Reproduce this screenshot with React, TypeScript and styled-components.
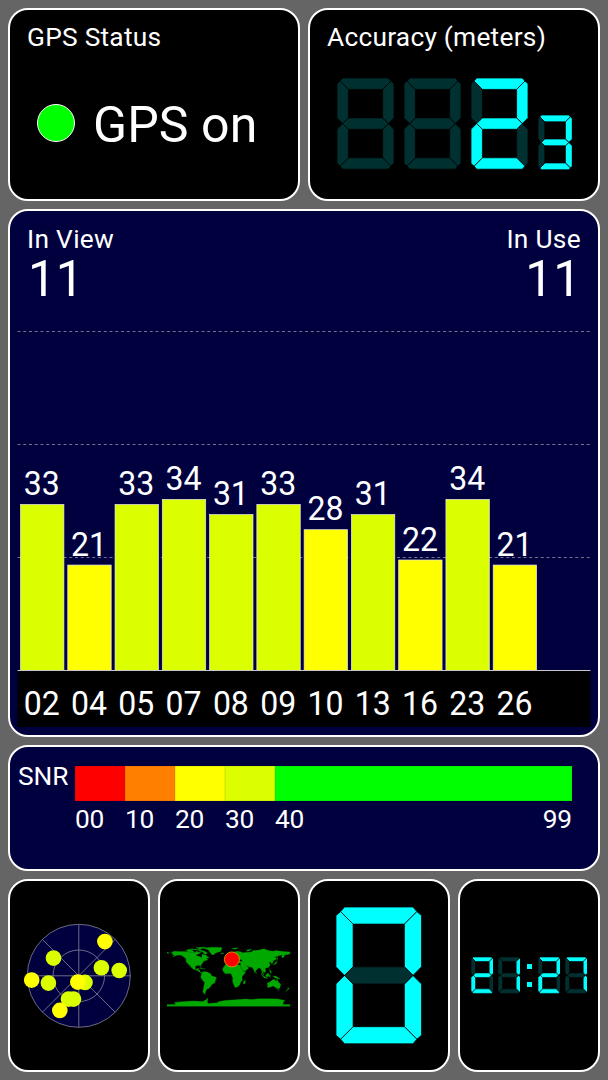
import React from "react";
import styled, { createGlobalStyle } from "styled-components";

const LIME = "#dcff00";
const YELLOW = "#ffff00";
const NAVY = "#00003f";
const CYAN = "#00ffff";
const DIM = "#003030";

const GlobalStyle = createGlobalStyle`
  html, body { margin: 0; background: #656565; }
  * { box-sizing: border-box; }
  svg { display: block; }
`;

const Screen = styled.main`
  width: 608px;
  height: 1080px;
  padding: 8px;
  display: grid;
  grid-template-rows: 193px 528px 126px 193px;
  row-gap: 8px;
  background: #656565;
  color: #fff;
  font-family: Roboto, sans-serif;
  overflow: hidden;
`;

const Row = styled.div<{ $columns: number }>`
  display: grid;
  grid-template-columns: repeat(${(p) => p.$columns}, 1fr);
  column-gap: 8px;
`;

const Panel = styled.section<{ $navy?: boolean }>`
  display: flex;
  flex-direction: column;
  min-width: 0;
  border: 2px solid #fff;
  border-radius: 20px;
  background: ${(p) => (p.$navy ? NAVY : "#000")};
  overflow: hidden;
`;

const IconPanel = styled(Panel)`
  align-items: center;
  justify-content: center;
`;

const Title = styled.h2`
  margin: 0;
  padding: 12px 17px 0;
  height: 42px;
  font-size: 26.3px;
  line-height: 30px;
  font-weight: 400;
  letter-spacing: 0.25px;
  white-space: nowrap;
`;

const StatusLine = styled.div`
  display: flex;
  align-items: center;
  gap: 18.5px;
  margin-top: 41px;
  padding-left: 26.5px;
  font-size: 50px;
  line-height: 60px;
  letter-spacing: 0.1px;
`;

const StatusText = styled.span`
  padding-top: 2px;
  margin-bottom: -2px;
`;

const Lamp = styled.span`
  width: 38px;
  height: 38px;
  border-radius: 50%;
  border: 1px solid #fff;
  background: #00ff00;
`;

const Readout = styled.div`
  display: flex;
  align-items: flex-end;
  gap: 10px;
  margin: 26.4px 0 0 27px;
`;

const Counts = styled.div`
  display: flex;
  justify-content: space-between;
  height: 92px;
  padding: 13px 17px 0;
`;

const Count = styled.div<{ $right?: boolean }>`
  text-align: ${(p) => (p.$right ? "right" : "left")};
  font-size: 26.3px;
  line-height: 30px;
  letter-spacing: 0.3px;
`;

const CountValue = styled.div`
  padding-left: 1px;
  font-size: 49.5px;
  line-height: 50px;
  letter-spacing: 0;
`;

const Scale = styled.div`
  display: flex;
  padding: 19px 0 0 8px;
  font-size: 26.3px;
  line-height: 30px;
`;

const ScaleName = styled.span`
  width: 56.7px;
  margin-top: -5px;
`;

const ScaleBody = styled.div`
  width: 497px;
`;

const ScaleBar = styled.div`
  display: flex;
  height: 35px;
`;

const Band = styled.div<{ $color: string; $wide?: boolean }>`
  flex: ${(p) => (p.$wide ? "1" : "0 0 50px")};
  background: ${(p) => p.$color};
  box-shadow: inset 0 0 0 0.5px rgba(0, 0, 0, 0.12);
`;

const ScaleLabels = styled.div`
  display: flex;
  margin-top: 3px;
`;

const ScaleLabel = styled.span`
  width: 50px;
  padding-left: 0.4px;
  letter-spacing: -0.3px;
  &:last-child {
    width: auto;
    margin-left: auto;
  }
`;

const Clock = styled.div`
  display: flex;
  align-items: center;
  gap: 4.2px;
`;

const Colon = styled.div`
  display: flex;
  flex-direction: column;
  gap: 13px;
  margin: 0 1.8px 0 2px;
`;

const ColonDot = styled.i`
  width: 5px;
  height: 5px;
  background: ${CYAN};
`;

const SEGMENTS: Record<string, string> = {
  a: "0.27,0.27 0.5,0 4.5,0 4.73,0.27 4,1 1,1",
  b: "4.73,0.27 5,0.5 5,3.5 4.5,4 4,3.5 4,1",
  c: "4.5,4 5,4.5 5,7.5 4.73,7.73 4,7 4,4.5",
  d: "4.73,7.73 4.5,8 0.5,8 0.27,7.73 1,7 4,7",
  e: "0.27,7.73 0,7.5 0,4.5 0.5,4 1,4.5 1,7",
  f: "0.27,0.27 0,0.5 0,3.5 0.5,4 1,3.5 1,1",
  g: "0.5,4 1,3.5 4,3.5 4.5,4 4,4.5 1,4.5",
};

const LIT: Record<string, string> = {
  "": "",
  "0": "abcdef",
  "1": "bc",
  "2": "abged",
  "3": "abgcd",
  "7": "abc",
};

function Digit({ value, unit }: { value: string; unit: number }) {
  return (
    <svg width={unit * 5} height={unit * 8} viewBox="0 0 5 8">
      {Object.entries(SEGMENTS).map(([name, points]) => (
        <polygon
          key={name}
          points={points}
          fill={LIT[value].includes(name) ? CYAN : DIM}
          stroke="#000"
          strokeWidth={Math.min(0.13, 0.75 / unit)}
          strokeLinejoin="bevel"
        />
      ))}
    </svg>
  );
}

const SATELLITES: [string, number][] = [
  ["02", 33], ["04", 21], ["05", 33], ["07", 34], ["08", 31], ["09", 33],
  ["10", 28], ["13", 31], ["16", 22], ["23", 34], ["26", 21],
];

const BASE = 368.5;

function SignalChart() {
  return (
    <svg width="588" height="432" viewBox="0 1 588 432" fontSize="33" fill="#fff" textAnchor="middle">
      <rect x="7.5" y={BASE} width="573" height="56.5" fill="#000" />
      {[29.5, 142.5, 255.5].map((y) => (
        <line key={y} x1="7.5" x2="580" y1={y} y2={y} stroke="#73738f" strokeDasharray="3 2.75" />
      ))}
      {SATELLITES.map(([id, snr], i) => {
        const x = 10.5 + i * 47.27;
        const h = snr * 5.05 - 0.6;
        return (
          <g key={id}>
            <rect x={x} y={BASE - h} width="43.4" height={h} fill={snr > 29 ? LIME : YELLOW} stroke="#e8e8e8" strokeWidth="0.7" />
            <text x={x + 21.3} y={BASE - h - 9.3} textLength="36" lengthAdjust="spacingAndGlyphs">{snr}</text>
            <text x={x + 21.3} y={BASE + 44} textLength="36" lengthAdjust="spacingAndGlyphs">{id}</text>
          </g>
        );
      })}
      <line x1="7.5" x2="580.5" y1={BASE} y2={BASE} stroke="#c8c8c8" />
    </svg>
  );
}

const SKY_DOTS: [number, number, string][] = [
  [26.1, -34.2, YELLOW], [-25.3, -17.7, LIME], [22.6, -8, LIME], [40.4, -5.3, LIME],
  [-30.4, 7.3, LIME], [-47.1, 4.3, YELLOW], [6.2, 6.6, LIME], [-1, 6.3, YELLOW],
  [-10.3, 23.3, LIME], [-5.3, 23.3, LIME], [-19, 34.6, YELLOW],
];

function SkyPlot() {
  return (
    <svg width="112" height="112" viewBox="-55.8 -55.8 112 112">
      <g stroke="#85859c" strokeWidth="0.8" fill="none">
        <circle r="51.5" fill={NAVY} />
        <circle r="25.8" />
        <path d="M0-51.5V51.5M-51.5 0H51.5M-36.4-36.4L36.4 36.4M36.4-36.4L-36.4 36.4" />
      </g>
      {SKY_DOTS.map(([x, y, color]) => (
        <circle key={`${x},${y}`} cx={x} cy={y} r="7.8" fill={color} />
      ))}
    </svg>
  );
}

/* Coastlines in degrees of longitude and negated latitude. */
const LAND = [
  "-168,-66 -165,-68 -162,-70 -156,-71 -141,-70 -128,-70 -120,-69 -108,-68 -96,-68 -94,-72 -88,-68 -82,-69 -82,-66 -87,-64 -94,-60 -94,-58 -82,-55 -80,-51 -78,-55 -77,-62 -70,-61 -65,-59 -60,-54 -56,-52 -66,-50 -60,-46 -66,-44 -70,-43 -74,-40 -76,-36 -81,-31 -80,-25 -83,-29 -90,-30 -97,-27 -97,-20 -94,-18 -90,-21 -87,-21 -89,-16 -84,-15 -83,-10 -78,-9 -80,-7 -86,-11 -94,-16 -104,-19 -109,-25 -113,-31 -115,-31 -110,-23 -117,-33 -124,-40 -124,-48 -130,-54 -140,-60 -152,-59 -158,-56 -164,-54 -157,-59 -165,-61 -161,-64",
  "-125,-72 -117,-76 -105,-73 -101,-69 -115,-69",
  "-90,-73 -80,-74 -68,-70 -62,-66 -66,-62 -74,-65 -73,-69 -82,-70",
  "-120,-76 -108,-78 -95,-77 -82,-76 -80,-75 -98,-75",
  "-95,-81 -80,-83 -65,-83 -75,-79 -88,-77 -88,-80",
  "-72,-78 -60,-82 -40,-83 -20,-82 -20,-75 -24,-70 -38,-66 -44,-60 -50,-62 -54,-68 -60,-76",
  "-24,-65 -16,-66 -14,-65 -19,-63",
  "-85,-22 -80,-23 -74,-20 -78,-20",
  "-74,-20 -68,-19 -72,-18",
  "-78,-8 -72,-12 -62,-10 -52,-5 -50,0 -44,3 -35,6 -38,13 -40,21 -48,26 -54,34 -58,38 -62,39 -65,43 -67,48 -69,52 -67,55 -72,53 -75,47 -73,38 -70,20 -76,14 -81,6 -80,-1",
  "-17,-15 -16,-22 -10,-30 -6,-35 10,-37 11,-33 20,-31 33,-31 37,-22 43,-12 51,-12 46,-4 40,3 40,15 35,20 34,26 28,33 19,35 14,23 12,16 13,7 9,-1 9,-4 4,-6 -8,-5 -13,-9",
  "44,17 50,15 48,24 44,25",
  "-9,-37 -9,-43 -2,-43 -4,-48 3,-51 8,-54 8,-57 12,-56 11,-54 20,-55 22,-59 29,-60 22,-61 24,-65 18,-60 16,-56 12,-59 6,-58 5,-62 14,-68 26,-71 40,-68 40,-66 55,-68 67,-69 72,-73 86,-74 104,-78 113,-74 130,-71 140,-73 160,-70 180,-69 180,-65 178,-62 163,-60 163,-55 157,-51 156,-58 160,-61 152,-59 136,-54 141,-48 131,-43 129,-36 126,-34 125,-39 118,-39 122,-31 118,-24 108,-21 109,-12 105,-9 100,-13 103,-1 98,-9 97,-16 92,-22 87,-21 80,-14 77,-8 73,-19 68,-24 57,-26 50,-30 56,-25 59,-22 52,-15 43,-13 35,-28 36,-36 27,-37 29,-41 41,-42 38,-47 30,-46 27,-41 22,-37 19,-42 13,-45 18,-40 15,-38 8,-44 3,-43 -2,-37",
  "-6,-50 1,-51 0,-54 -3,-59 -6,-57",
  "-10,-52 -6,-52 -6,-55 -10,-54",
  "10,-78 22,-81 28,-80 18,-77",
  "52,-71 56,-75 68,-77 60,-72",
  "130,-31 136,-33 141,-36 141,-41 145,-44 139,-40 135,-35",
  "142,-54 144,-49 142,-46",
  "95,-6 105,3 115,8 105,7 97,-2",
  "109,-2 117,-7 119,-1 115,4 110,3",
  "119,-1 125,-2 121,1 123,5 119,4",
  "120,-18 124,-13 126,-7 122,-8 121,-14",
  "131,1 141,3 151,10 143,9 138,8 132,4",
  "80,-10 82,-7 80,-6",
  "114,22 122,18 130,12 136,12 136,15 140,17 142,11 146,19 153,26 150,37 143,39 138,35 131,31 123,34 115,35",
  "145,41 148,41 147,44",
  "173,35 178,38 174,42 167,47 172,41 175,39",
  "-180,90 -180,85 -155,85 -158,79 -130,76 -100,75 -75,76 -66,71 -60,66 -62,75 -60,82 -32,80 -30,77 -10,73 20,71 50,69 70,70 90,68 120,68 145,69 165,73 160,79 160,85 180,85 180,90",
  "-180,-69 -174,-66 -171,-66 -180,-65",
];

function WorldMap() {
  return (
    <svg width="124" height="64" viewBox="-180 -92 363 187">
      {LAND.map((points) => (
        <polygon key={points} points={points} fill="#00a800" stroke="#00a800" strokeWidth="0.8" />
      ))}
      <circle cx="10" cy="-47" r="22" fill="#f00" stroke="#e0a000" strokeWidth="2.5" />
    </svg>
  );
}

export default function App() {
  return (
    <>
      <GlobalStyle />
      <Screen>
        <Row $columns={2}>
          <Panel>
            <Title>GPS Status</Title>
            <StatusLine><Lamp /><StatusText>GPS on</StatusText></StatusLine>
          </Panel>
          <Panel>
            <Title>Accuracy (meters)</Title>
            <Readout>
              <Digit value="" unit={11.4} />
              <Digit value="" unit={11.4} />
              <Digit value="2" unit={11.4} />
              <Digit value="3" unit={6.85} />
            </Readout>
          </Panel>
        </Row>
        <Panel $navy>
          <Counts>
            <Count>In View<CountValue>11</CountValue></Count>
            <Count $right>In Use<CountValue>11</CountValue></Count>
          </Counts>
          <SignalChart />
        </Panel>
        <Panel $navy>
          <Scale>
            <ScaleName>SNR</ScaleName>
            <ScaleBody>
              <ScaleBar>
                <Band $color="#ff0000" />
                <Band $color="#ff8000" />
                <Band $color={YELLOW} />
                <Band $color={LIME} />
                <Band $color="#00ff00" $wide />
              </ScaleBar>
              <ScaleLabels>
                {["00", "10", "20", "30", "40", "99"].map((label) => (
                  <ScaleLabel key={label}>{label}</ScaleLabel>
                ))}
              </ScaleLabels>
            </ScaleBody>
          </Scale>
        </Panel>
        <Row $columns={4}>
          <IconPanel><SkyPlot /></IconPanel>
          <IconPanel><WorldMap /></IconPanel>
          <IconPanel><Digit value="0" unit={17.1} /></IconPanel>
          <IconPanel>
            <Clock>
              <Digit value="2" unit={4.55} />
              <Digit value="1" unit={4.55} />
              <Colon><ColonDot /><ColonDot /></Colon>
              <Digit value="2" unit={4.55} />
              <Digit value="7" unit={4.55} />
            </Clock>
          </IconPanel>
        </Row>
      </Screen>
    </>
  );
}
